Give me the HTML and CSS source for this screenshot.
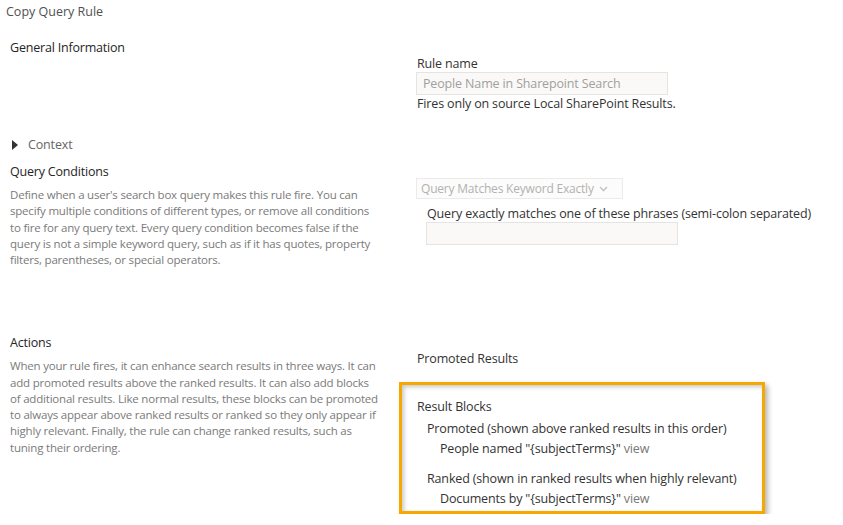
FILE: index.html
```html
<!DOCTYPE html>
<html lang="en">
<head>
<meta charset="utf-8">
<title>Copy Query Rule</title>
<link rel="stylesheet" href="styles.css">
</head>
<body>
<div class="page">
  <div class="title">Copy Query Rule</div>

  <div class="section general">
    <div class="left">
      <div class="heading">General Information</div>
    </div>
    <div class="right">
      <div class="label">Rule name</div>
      <div class="input"><span class="placeholder">People Name in Sharepoint Search</span></div>
      <div class="label note">Fires only on source Local SharePoint Results.</div>
    </div>
  </div>

  <div class="context">
    <span class="tri"></span><span class="context-text">Context</span>
  </div>

  <div class="section conditions">
    <div class="left">
      <div class="heading">Query Conditions</div>
      <p class="desc">Define when a user's search box query makes this rule fire. You can specify multiple conditions of different types, or remove all conditions to fire for any query text. Every query condition becomes false if the query is not a simple keyword query, such as if it has quotes, property filters, parentheses, or special operators.</p>
    </div>
    <div class="right">
      <div class="select"><span>Query Matches Keyword Exactly</span>
        <svg class="chev" width="9" height="6" viewBox="0 0 9 6"><path d="M1 1 L4.5 4.5 L8 1" fill="none" stroke="#c8c6c4" stroke-width="1.6"/></svg>
      </div>
      <div class="sub">
        <div class="label">Query exactly matches one of these phrases (semi-colon separated)</div>
        <div class="input wide"></div>
      </div>
    </div>
  </div>

  <div class="section actions">
    <div class="left">
      <div class="heading">Actions</div>
      <p class="desc desc-actions">When your rule fires, it can enhance search results in three ways. It can add promoted results above the ranked results. It can also add blocks<br>of additional results. Like normal results, these blocks can be promoted to always appear above ranked results or ranked so they only appear if highly relevant. Finally, the rule can change ranked results, such as tuning their ordering.</p>
    </div>
    <div class="right">
      <div class="label">Promoted Results</div>
      <div class="blocks">
        <div class="label">Result Blocks</div>
        <div class="group first">
          <div class="label">Promoted (shown above ranked results in this order)</div>
          <div class="item">People named "{subjectTerms}" <span class="view">view</span></div>
        </div>
        <div class="group">
          <div class="label">Ranked (shown in ranked results when highly relevant)</div>
          <div class="item">Documents by "{subjectTerms}" <span class="view">view</span></div>
        </div>
      </div>
    </div>
  </div>
</div>
</body>
</html>
```

FILE: styles.css
```css
* { box-sizing: border-box; }
html, body { margin: 0; padding: 0; background: #fff; }
body {
  font-family: "Open Sans", "Noto Sans", "Liberation Sans", sans-serif;
  font-size: 12.5px;
  line-height: 16px;
  letter-spacing: -0.15px;
  color: #333;
}
.page { padding: 4px 0 0 0; }
.title { padding-left: 6px; color: #505050; letter-spacing: 0; }

.section { display: flex; }
.left { width: 417px; padding-left: 10px; flex: none; }
.right { flex: 1; }

.heading { color: #252525; font-size: 12.5px; letter-spacing: -0.2px; }
.desc {
  margin: 7px 0 0 0;
  width: 366px;
  color: #7a7a7a;
  font-size: 11.5px;
  letter-spacing: -0.2px;
  line-height: 16.25px;
}
.desc-actions { width: 375px; }

.general { margin-top: 20px; }
.general .right { padding-top: 16px; }
.label { color: #333; }
.input {
  width: 252px;
  height: 23px;
  margin-left: -1px;
  background: #faf9f8;
  border: 1px solid #e6e4e2;
  padding: 2px 6px;
  line-height: 17px;
}
.placeholder { color: #a19f9d; }
.note { margin-top: 1px; }

.context { margin-top: 25px; padding-left: 12px; display: flex; align-items: center; height: 16px; }
.tri {
  width: 0; height: 0;
  border-top: 5px solid transparent;
  border-bottom: 5px solid transparent;
  border-left: 6px solid #333;
  margin-right: 10px;
}
.context-text { color: #666; }

.conditions { margin-top: 11px; }
.conditions .right { padding-top: 14px; }
.select {
  width: 207px;
  height: 21px;
  margin-left: -1px;
  border: 1px solid #ecebea;
  background: #fcfcfc;
  color: #b3b1af;
  padding: 1px 4px;
  font-size: 12px;
  letter-spacing: -0.2px;
  white-space: nowrap;
  line-height: 17px;
  display: flex;
  align-items: center;
}
.chev { margin-left: 5px; }
.sub { padding-left: 10px; margin-top: 7px; }
.input.wide { margin-left: -1px; width: 252px; }

.actions { margin-top: 67px; }
.actions .right { padding-top: 16px; }
.blocks {
  margin-top: 15px;
  margin-left: -18px;
  width: 366px;
  height: 132px;
  border: 3px solid #f7a800;
  padding: 14px 0 0 15px;
  box-shadow: inset 2px 2px 4px rgba(0,0,0,0.22), 3px 3px 5px rgba(0,0,0,0.28);
}
.group { padding-left: 10px; margin-top: 14px; }
.group.first { margin-top: 6px; }
.item { padding-left: 13px; margin-top: 4px; }
.view { color: #777; }
```
